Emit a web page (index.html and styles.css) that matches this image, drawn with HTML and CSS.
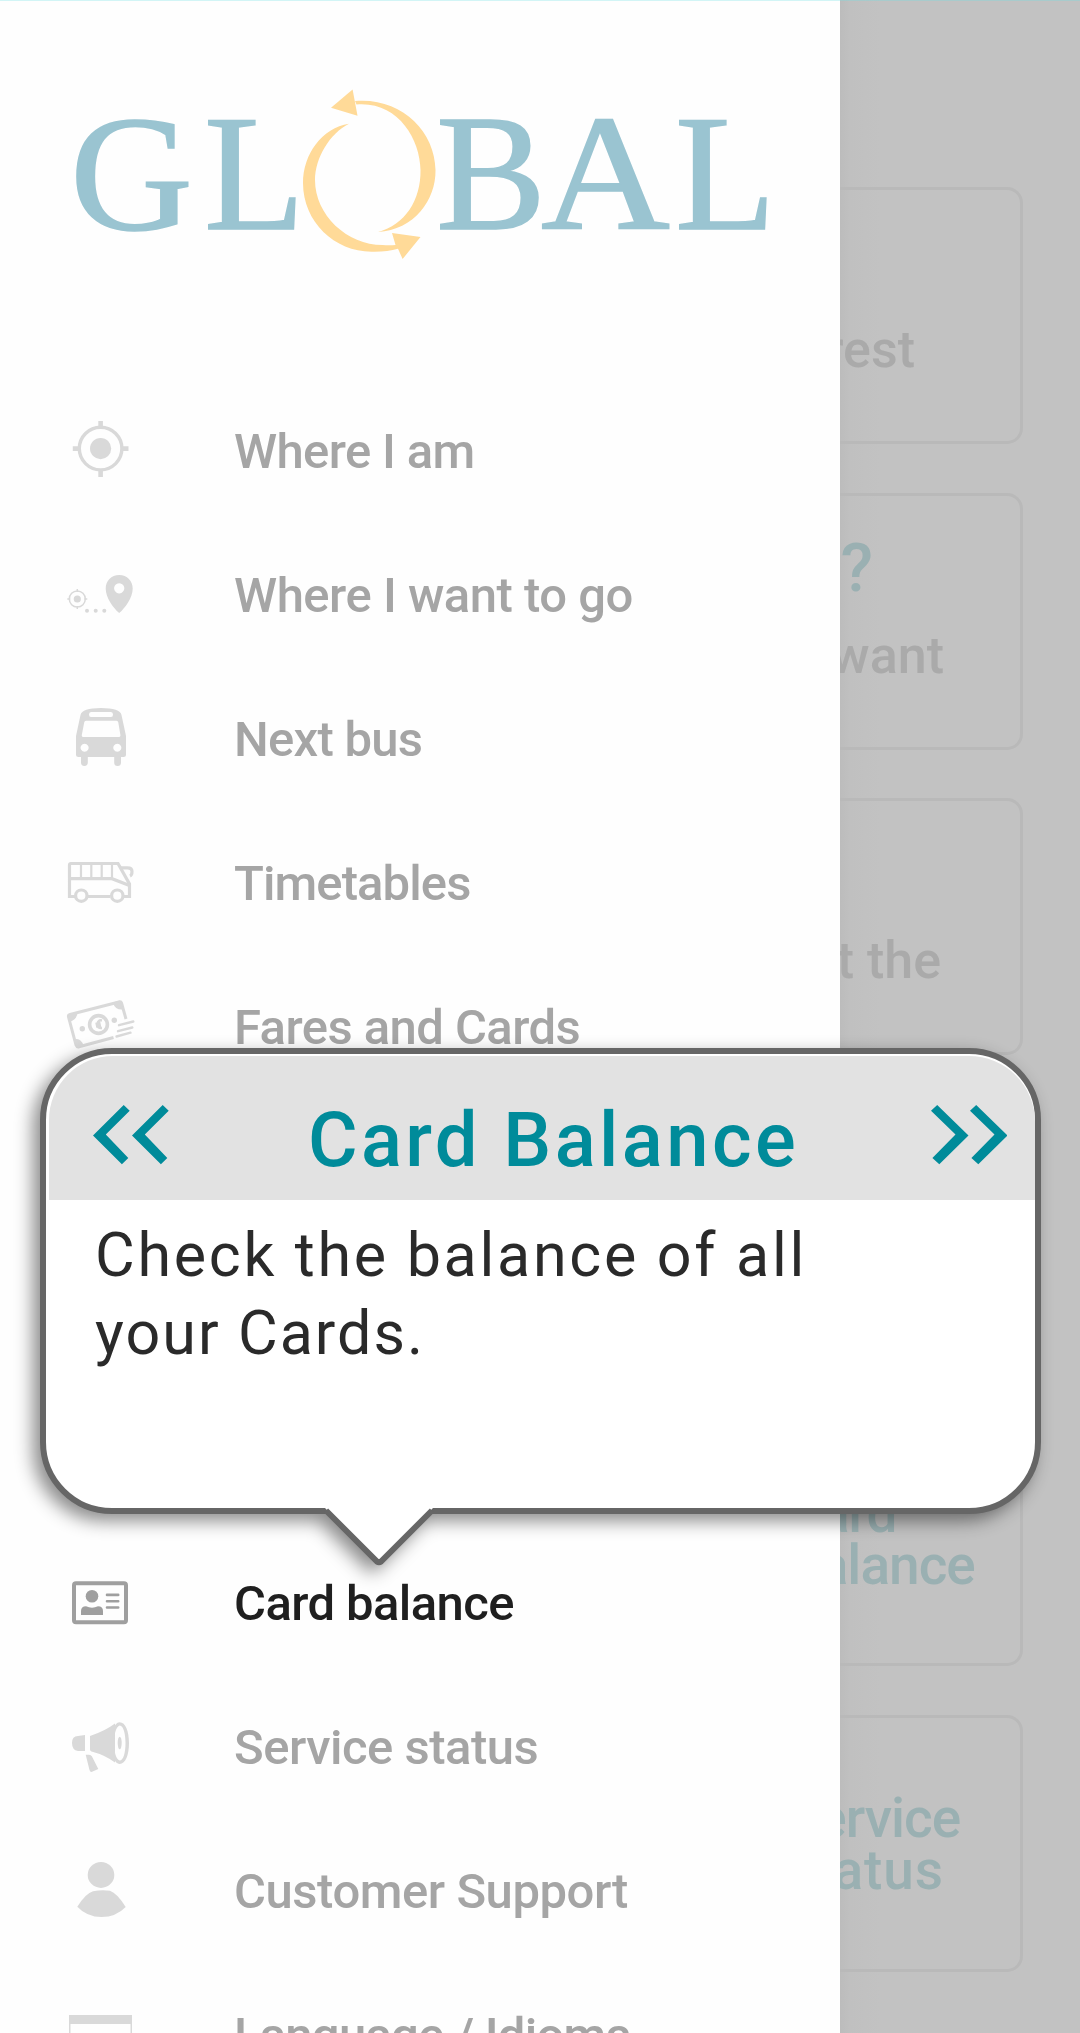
FILE: index.html
```html
<!DOCTYPE html>
<html lang="en">
<head>
<meta charset="utf-8">
<title>Global</title>
<link rel="stylesheet" href="styles.css">
</head>
<body>
<div class="app">
  <main class="home">
    <section class="card card-wide"><p class="desc desc-nearest">nearest</p></section>
    <section class="card card-wide"><h2 class="question">go?</h2><p class="desc desc-want">you want</p></section>
    <section class="card card-wide"><p class="desc desc-the">at the</p></section>
    <section class="card"></section>
    <section class="card card-half"><h2 class="tile">Card<br>Balance</h2></section>
    <section class="card card-half"><h2 class="tile">Service<br><span class="tile-loose">status</span></h2></section>
  </main>

  <aside class="drawer">
    <svg class="logo" viewBox="0 0 840 378" role="img" aria-label="Global">
      <g class="logo-text">
        <text x="70" y="229" textLength="123" lengthAdjust="spacingAndGlyphs">G</text>
        <text x="204" y="229">L</text>
        <text x="436" y="229">B</text>
        <text x="541" y="229" textLength="129" lengthAdjust="spacingAndGlyphs">A</text>
        <text x="675" y="229">L</text>
      </g>
      <g class="logo-ring">
        <path d="M355 101C400 97 435 130 435.500 170C436 200 414 230 378 232C405 225 421 200 420.500 170C420 138 397 101 356.500 104.500Z"/>
        <path d="M352.600 89.500L331 107.700L357.500 115.700Z"/>
        <path d="M349 123.700C322 128 303 154 303 183C303 222 335 252 372 251.700Q387 252 398 248.700L402.600 259L420.500 237L392 233L395.500 245Q389 245.500 382.700 245C347 245 315 215 315 180C315 158 330 133 349 123.700Z"/>
      </g>
    </svg>

    <nav class="menu">
      <a class="item"><svg class="icon" viewBox="0 0 80 80"><circle class="line" cx="40.600" cy="38.600" r="21.300" stroke-width="3.400"/><circle cx="40.600" cy="38.600" r="10.600"/><path class="line" stroke-width="4.600" d="M40.600 11v7M40.600 59.500v7.500M12.800 38.600h7M61.500 38.600h7"/></svg><span class="label l1">Where I am</span></a>
      <a class="item"><svg class="icon" viewBox="0 0 80 80"><circle class="line" cx="17.300" cy="45" r="8" stroke-width="1.500"/><circle cx="17.300" cy="45" r="3.600"/><path class="line" stroke-width="1.500" d="M17.300 35v3M17.300 52v3M7.300 45h3M24.300 45h3"/><circle cx="27" cy="56.700" r="2"/><circle cx="35.700" cy="56.700" r="2"/><circle cx="44.300" cy="56.700" r="2"/><path fill-rule="evenodd" d="M59.200 21c8 0 13.500 6 13.500 13.500c0 9-7.500 19.500-13.500 24.500c-6-5-13.500-15.500-13.500-24.500c0-7.500 5.500-13.500 13.500-13.500zM59.200 29.200a5.100 5.100 0 1 0 .01 0z"/></svg><span class="label l2">Where I want to go</span></a>
      <a class="item"><svg class="icon" viewBox="0 0 80 80"><path fill-rule="evenodd" d="M16 38L20.500 17Q22 10 41 10T61.500 17L66 38V56.500Q66 59 63.500 59H61V64.500A3.400 3.500 0 0 1 54.200 64.500V59H27.800V64.500A3.400 3.500 0 0 1 21 64.500V59H18.500Q16 59 16 56.500ZM31 14Q29 14 29 16.500T31 19H51Q53 19 53 16.500T51 14ZM26 22.700Q24.500 22.700 24.200 24.500L21.800 37Q21.500 39 23.500 39H58.700Q60.700 39 60.400 37L58.300 24.500Q58 22.700 56.500 22.700ZM24.600 45.700a4 4 0 1 0 .01 0zM57.300 45.700a4 4 0 1 0 .01 0z"/></svg><span class="label l3">Next bus</span></a>
      <a class="item"><svg class="icon" viewBox="0 0 80 80"><g class="line" stroke-width="3.200"><path d="M15 54.500H9.500V23Q9.500 21.500 11 21.500H58L69.500 42V54.500H64M28 54.500H50.500M9.500 36.700H52L69.500 43.500"/><path stroke-width="2.200" d="M21 22v14M31.300 22v14M41.700 22v14M52 22v14"/><circle cx="21.300" cy="53.700" r="5.700"/><circle cx="57.300" cy="53.700" r="5.700"/><path d="M60 25.800h7.500Q72 25.800 72 29.500Q72 33 70 34"/></g></svg><span class="label l4">Timetables</span></a>
      <a class="item"><svg class="icon" viewBox="0 0 80 80"><g class="line" stroke-width="3"><path d="M66 33L61.500 17Q61 15.500 59 16L10 28.500Q8 29 8.500 31L16 59Q17 61.500 19 60.800L53.500 51.500"/><circle cx="38.500" cy="38.500" r="8.900" stroke-width="3.600"/><path stroke-width="2.400" d="M42 34.500q-4-1-4.500 3.500t4.500 4M35.500 38l5-1M36 40.500l5-1"/><path stroke-width="2.400" stroke-linecap="round" d="M59 39.200L73.300 35.500M58 45.200L72.300 41.500M56.500 50.500L70.500 46.700"/></g><path d="M8 28.500l9.500-2.500q0 7-7 9.500zM53 16.500l7-2 3.500 9q-8.500 1-10.500-7zM13.800 53.500q7-2.500 9.700 6l-7 2.200z"/><circle cx="22.300" cy="42.700" r="2.700"/><circle cx="54.300" cy="34.300" r="2.700"/></svg><span class="label l5">Fares and Cards</span></a>

      <a class="item item-current"><svg class="icon" viewBox="0 0 80 80"><rect class="line" x="14" y="21.300" width="52" height="39" rx="2" stroke-width="4"/><circle cx="32" cy="34.300" r="6.300"/><path d="M21 53V49Q21 44.300 26 44.300Q32 47 38 44.300Q43 44.300 43 49V53Z"/><path class="line" stroke-width="2.600" stroke-linecap="round" d="M47 32.900H58.200M47 39.200H58.200M47 45.500H58.200"/></svg><span class="label l6">Card balance</span></a>
      <a class="item"><svg class="icon" viewBox="0 0 80 80"><path d="M25 29V45H18Q12 44 12 37T18 30ZM30 30Q45 25 55 17.500V56.500Q45 49 31.500 45.500Q30 45 30 43.500ZM25.700 48.700H29Q31 48.700 32 50.500L38.300 63L31.500 66Q30 66 29.500 64Z"/><path fill-rule="evenodd" d="M59.700 16.200C65.500 16.200 69 25 69 37S65.500 57.900 59.700 57.900C53.500 57.900 52 46 52 37S53.500 16.200 59.700 16.200ZM59.700 19.500C56 21 54 28 54 37S56 53 59.700 54.600C63.500 54.600 65.500 46 65.500 37S63.500 19.500 59.700 19.500Z"/><ellipse cx="59.700" cy="37" rx="2" ry="6.300"/></svg><span class="label l7">Service status</span></a>
      <a class="item"><svg class="icon" viewBox="0 0 80 80"><ellipse cx="41" cy="24.900" rx="13.300" ry="13"/><path d="M17.300 56.700Q26 43 33 41.200Q42 39.500 50 40.700Q57 43 65.700 57Q56 67 41.500 67T17.300 56.700Z"/></svg><span class="label l8">Customer Support</span></a>
      <a class="item"><svg class="icon" viewBox="0 0 80 80"><path d="M9 21h63v9H9zM9 30h1.500v40H9zM70.500 30H72v40h-1.500z"/></svg><span class="label l9">Language / Idioma</span></a>
    </nav>
  </aside>

  <div class="tip" role="dialog">
    <div class="tip-box">
      <header class="tip-head">
        <svg class="chev" viewBox="0 0 76 60"><path d="M30.700 0L36.700 5.700L12.800 29.600L35.300 52.900L28.900 59.300L0 30.400ZM69.700 0L75.700 5.700L51.800 29.600L74.300 52.900L67.900 59.300L39 30.400Z"/></svg>
        <h1 class="tip-title">Card Balance</h1>
        <svg class="chev" viewBox="0 0 76 60"><path d="M6.200 0L0 5.700L24.500 29.600L1.400 52.900L8.300 59.300L37.500 30.400ZM45.200 0L39 5.700L63.500 29.600L40.400 52.900L47.300 59.300L76.500 30.400Z"/></svg>
      </header>
      <p class="tip-body"><span class="t1">Check the balance of all</span><br><span class="t2">your Cards.</span></p>
    </div>
    <svg class="tail" viewBox="0 0 112 60"><path class="tail-fill" d="M2 0L53 51Q56 54 59 51L110 0Z"/><path class="tail-line" d="M3 2.500L54 53.500Q56 55 58 53.500L109 2.500"/></svg>
  </div>
  <div class="status-line"></div>
</div>
</body>
</html>
```
FILE: styles.css
```css
* { box-sizing: border-box; margin: 0; padding: 0; }

body { font-family: Roboto, "Liberation Sans", sans-serif; background: #fff; }

.app {
  position: relative;
  width: 1080px;
  height: 2033px;
  overflow: hidden;
}

.status-line {
  position: absolute;
  inset: 0 0 auto 0;
  height: 1px;
  background: rgba(110, 225, 230, .3);
}

/* dimmed home screen */
.home {
  display: flex;
  flex-direction: column;
  align-items: flex-end;
  gap: 48.600px;
  height: 100%;
  padding: 187px 57px 0 0;
  background: linear-gradient(90deg, #bcbcbc 840px, #c0c0c0 850px, #c2c2c2 880px);
}

.card {
  flex: none;
  display: flex;
  flex-direction: column;
  width: 966px;
  height: 257px;
  border: 3px solid #b9b9b9;
  border-radius: 16px;
  color: #aaa;
}

.card-wide { align-items: flex-end; justify-content: flex-end; padding-bottom: 61px; }
.card-half { width: 463px; justify-content: center; padding: 2px 0 0 222px; }

.desc { font-size: 52px; line-height: 60px; font-weight: 500; white-space: nowrap; }
.desc-nearest { margin-right: 105px; }
.desc-want { margin-right: 76px; }
.desc-the { margin-right: 79px; }

.question {
  margin: 0 147px 28px 0;
  font-size: 67px;
  line-height: 60px;
  font-weight: 500;
  color: #9ab0b2;
}

.tile { font-size: 55px; line-height: 52px; font-weight: 500; letter-spacing: -1px; color: #9ab0b2; }
.tile-loose { letter-spacing: .9px; }

/* navigation drawer */
.drawer {
  position: absolute;
  inset: 0 auto 0 0;
  width: 840px;
  background: #fefefe;
}

.logo { display: block; width: 840px; height: 378px; }
.logo-text { font-family: "Liberation Serif", serif; font-size: 165px; fill: #9ac4d1; stroke: #9ac4d1; stroke-width: 1.5; }
.logo-ring { fill: #ffda98; }

.item {
  display: flex;
  align-items: center;
  height: 144px;
  padding-left: 60px;
  color: #a5a5a5;
}

.item-current { margin-top: 432px; color: #1f1f1f; }

.icon { flex: none; width: 80px; height: 80px; margin-right: 94px; fill: #d9d9d9; stroke: none; }
.icon .line { fill: none; stroke: #d9d9d9; }
.item-current .icon { fill: #9f9f9f; }
.item-current .icon .line { stroke: #9f9f9f; }

.label { padding-top: 4px; font-size: 49px; line-height: 60px; font-weight: 500; white-space: nowrap; }
.l1 { letter-spacing: -.65px; }
.l2 { letter-spacing: -.5px; }
.l3 { letter-spacing: -.73px; }
.l4 { letter-spacing: -.9px; }
.l5 { letter-spacing: -.57px; }
.l6 { letter-spacing: -.6px; }
.l7 { letter-spacing: -.5px; }
.l8 { letter-spacing: -.45px; }
.l9 { letter-spacing: -.76px; }

/* coach-mark bubble */
.tip {
  position: absolute;
  top: 1048px;
  left: 40px;
  width: 1001px;
  filter: drop-shadow(-7px 7px 9px rgba(0, 0, 0, .45));
}

.tip-box {
  height: 466px;
  padding: 2px 0 0 3px;
  border: 6px solid #666;
  border-radius: 72px;
  background: #fff;
}

.tip-head {
  display: flex;
  align-items: flex-start;
  justify-content: space-between;
  height: 144px;
  padding: 49px 28px 0 44px;
  border-radius: 64px 66px 0 0;
  background: #e2e2e2;
}

.chev { width: 76px; height: 60px; fill: #008b9a; }

.tip-title {
  margin: -10px 0 0 7px;
  font-size: 76px;
  line-height: 90px;
  font-weight: 500;
  letter-spacing: 3.400px;
  color: #008b9a;
  white-space: nowrap;
}

.tip-body {
  padding: 16px 0 0 46px;
  font-size: 61px;
  line-height: 78px;
  color: #2a2a2a;
  white-space: nowrap;
}
.t1 { letter-spacing: 2.700px; }
.t2 { letter-spacing: 2.050px; }

.tail { position: absolute; top: 460px; left: 283px; width: 112px; height: 60px; }
.tail-fill { fill: #fff; }
.tail-line { fill: none; stroke: #666; stroke-width: 6; }
```
